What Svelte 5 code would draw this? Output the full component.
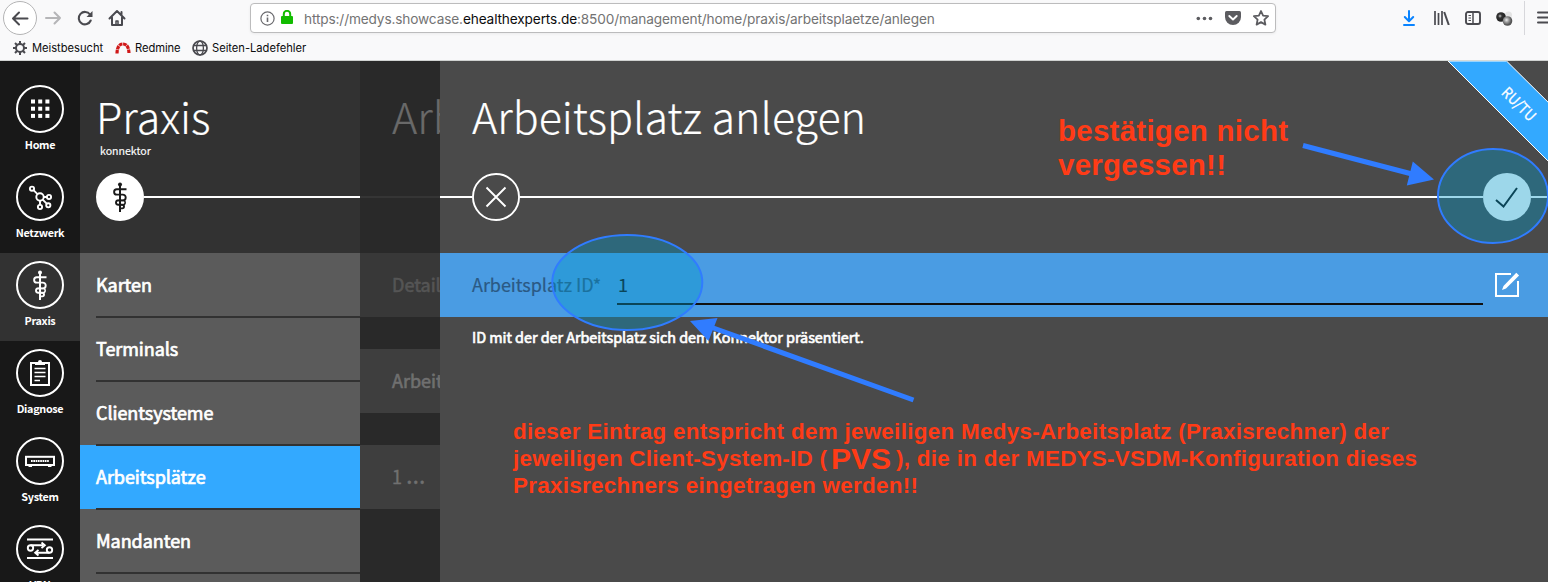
<script>
  const nav = [
    { id: 'home', label: 'Home' },
    { id: 'net', label: 'Netzwerk' },
    { id: 'praxis', label: 'Praxis' },
    { id: 'diag', label: 'Diagnose' },
    { id: 'system', label: 'System' },
    { id: 'vpn', label: 'VPN' }
  ];
  const menu = ['Karten', 'Terminals', 'Clientsysteme', 'Arbeitsplätze', 'Mandanten', ''];
  const dots = [15, 22.2, 29.4];
</script>

{#snippet staff()}
  <circle cx="24" cy="11.6" r="2" fill="currentColor" stroke="none" />
  <path d="M24 12v27" stroke-width="2" />
  <path d="M30.5 16.200H20.800a2.700 2.700 0 0 0 0 5.400h6a2.900 2.900 0 0 1 0 5.800h-4.600a2.100 2.100 0 0 0 0 4.400h4a1.800 1.800 0 0 1 0 3.600H23" stroke-width="1.900" />
  <path d="M20.500 27.400h6.500a2.200 2.200 0 0 1 0 4.400h-2" stroke-width="1.500" />
{/snippet}

<div class="page">
  <header class="chrome">
    <div class="toolbar">
      <div class="back">
        <svg width="34" height="34" viewBox="0 0 34 34" fill="none" stroke="#4a4a4f" stroke-width="2" stroke-linecap="round" stroke-linejoin="round"><path d="M10 17.500h14.500M16 11.500l-6 6 6 6" /></svg>
      </div>
      <svg class="fwd" width="18" height="18" viewBox="0 0 18 18" fill="none" stroke="#b5b5b7" stroke-width="2" stroke-linecap="round" stroke-linejoin="round"><path d="M2 9h14M10.500 3.500l5.500 5.500-5.500 5.500" /></svg>
      <svg class="reload" width="18" height="18" viewBox="0 0 18 18" fill="none" stroke="#4a4a4f" stroke-width="2.100" stroke-linecap="round"><path d="M14 5.500A6.200 6.200 0 1 0 14.700 11.500" /><path d="M16.500 2v6h-6z" fill="#4a4a4f" stroke="none" /></svg>
      <svg class="house" width="18" height="18" viewBox="0 0 18 18" fill="none" stroke="#4a4a4f" stroke-width="2" stroke-linejoin="round" stroke-linecap="round"><path d="M1.500 9.500L9 2l7.500 7.500M4 8.500V16h10V8.500M13.500 3v2.500" /><path d="M8 16v-4h2v4" stroke-width="1.500" /></svg>
      <div class="url">
        <svg class="info" width="15" height="15" viewBox="0 0 15 15" fill="none" stroke="#6b6b6f" stroke-width="1.200"><circle cx="7.500" cy="7.500" r="6.600" /><path d="M7.500 6.500v4.500M7.500 3.800v1.500" stroke-width="1.600" /></svg>
        <svg class="lock" width="12" height="14" viewBox="0 0 12 14"><rect y="6" width="12" height="8" rx="1" fill="#12bc00" /><path d="M2.800 7V4a3.200 3.200 0 0 1 6.400 0v3" fill="none" stroke="#12bc00" stroke-width="2" /></svg>
        <div class="address">https://medys.showcase.<b>ehealthexperts.de</b>:8500/management/home/praxis/arbeitsplaetze/anlegen</div>
        <svg class="more" width="17" height="5" viewBox="0 0 17 5" fill="#5c5c60"><circle cx="2.300" cy="2.500" r="1.800" /><circle cx="8.500" cy="2.500" r="1.800" /><circle cx="14.500" cy="2.500" r="1.800" /></svg>
        <svg class="pocket" width="16" height="14" viewBox="0 0 16 14"><path d="M1.500 0h13Q16 0 16 1.500V6a8 8 0 0 1-16 0V1.500Q0 0 1.500 0z" fill="#5c5c60" /><path d="M4.300 5L8 8.500 11.700 5" fill="none" stroke="#fff" stroke-width="1.900" stroke-linecap="round" stroke-linejoin="round" /></svg>
        <svg class="star" width="16" height="16" viewBox="0 0 16 16" fill="none" stroke="#5c5c60" stroke-width="1.800" stroke-linejoin="round"><path d="M8 1l2.100 4.600 5 .6-3.700 3.400 1 5L8 12.100l-4.400 2.500 1-5L.9 6.200l5-.6z" /></svg>
      </div>
      <div class="tools">
        <svg width="12" height="16" viewBox="0 0 12 16" fill="none" stroke="#0a84ff" stroke-width="2" stroke-linecap="round" stroke-linejoin="round"><path d="M6 1v10M1.800 7L6 11.200 10.200 7M1 15h10" /></svg>
        <svg width="16" height="14" viewBox="0 0 16 14" fill="none" stroke="#4a4a4f" stroke-width="2"><path d="M1 0v14M4.500 2v12M8 0v14" stroke-width="1.700" /><path d="M10.200 1l4.600 13" /></svg>
        <svg width="16" height="14" viewBox="0 0 16 14" fill="none" stroke="#4a4a4f" stroke-width="1.900"><rect x="1" y="1" width="14" height="12" rx="2" /><path d="M8 1v12" stroke-width="1.500" /><path d="M3.500 4.500h2.500M3.500 7h2.500M3.500 9.500h2.500" stroke-width="1" /></svg>
        <svg width="17" height="15" viewBox="0 0 17 15">
          <defs>
            <radialGradient id="ball1" cx=".4" cy=".4"><stop offset="0" stop-color="#ccc" /><stop offset=".4" stop-color="#333" /><stop offset="1" stop-color="#222" /></radialGradient>
            <radialGradient id="ball2" cx=".4" cy=".4"><stop offset="0" stop-color="#eee" /><stop offset=".5" stop-color="#999" /><stop offset="1" stop-color="#555" /></radialGradient>
          </defs>
          <circle cx="12.500" cy="4" r="3.500" fill="#e4e4e4" /><circle cx="5" cy="6" r="4.800" fill="url(#ball1)" /><circle cx="11.500" cy="10" r="4.800" fill="url(#ball2)" />
        </svg>
        <i class="sep"></i>
        <svg class="burger" width="14" height="14" viewBox="0 0 14 14" stroke="#4a4a4f" stroke-width="2" stroke-linecap="round"><path d="M1 1.500h13M1 6.500h13M1 11.500h13" /></svg>
      </div>
    </div>
    <div class="bookmarks">
      <svg width="14" height="14" viewBox="0 0 14 14" fill="none" stroke="#4a4a4f"><circle cx="7" cy="7" r="4" stroke-width="2" /><path d="M7 0v3M7 11v3M0 7h3M11 7h3M2 2l2 2M10 10l2 2M12 2l-2 2M4 10l-2 2" stroke-width="2" /></svg>
      <span class="b1">Meistbesucht</span>
      <svg width="16" height="12" viewBox="0 0 16 12" fill="none" stroke-width="3.200"><path d="M2 11.500Q2.300 2 8 2T14 11.500" stroke="#d01818" stroke-dasharray="3.600 .6" /></svg>
      <span class="b2">Redmine</span>
      <svg width="16" height="16" viewBox="0 0 16 16" fill="none" stroke="#4a4a4f" stroke-width="1.300"><circle cx="8" cy="8" r="7" stroke-width="1.700" /><ellipse cx="8" cy="8" rx="3.400" ry="7" /><path d="M1.500 5.500h13M1.500 10.500h13" /></svg>
      <span class="b3">Seiten-Ladefehler</span>
    </div>
  </header>

  <div class="app">
    <nav class="side">
      {#each nav as n}
        <div class="item" class:on={n.id === 'praxis'}>
          <svg width="48" height="48" viewBox="0 0 48 48" fill="none" stroke="currentColor">
            <circle cx="24" cy="24" r="23" stroke-width="2" />
            {#if n.id === 'home'}
              {#each dots as y}{#each dots as x}<rect x={x} y={y - 0.500} width="4" height="4" fill="currentColor" stroke="none" />{/each}{/each}
            {:else if n.id === 'net'}
              <g stroke-width="1.900"><circle cx="24" cy="24" r="3.700" /><circle cx="16" cy="15.700" r="2.100" /><circle cx="33" cy="24" r="2.100" /><circle cx="32.300" cy="32.300" r="2.100" /><circle cx="24" cy="34" r="2.100" /><path d="M17.500 17.200l4 4M27.700 24h3.200M26.700 26.700l4 4M24 27.700v4.200" /></g>
            {:else if n.id === 'praxis'}
              {@render staff()}
            {:else if n.id === 'diag'}
              <path d="M19.500 14H15v22h18V14h-4.500" stroke-width="2" /><path d="M19 16v-3h3a2 2 0 0 1 4 0h3v3z" fill="currentColor" stroke="none" /><path d="M18.500 19.500h11M18.500 23.500h11M18.500 27.500h11M18.500 31.500h5.500" stroke-width="1.700" />
            {:else if n.id === 'system'}
              <rect x="10" y="19.800" width="28" height="8.200" stroke-width="2" /><path d="M15 24h18" stroke-width="2" stroke-dasharray="1.700 .6" /><path d="M12.500 29.300h3.500M32 29.300h3.500" stroke-width="1.600" />
            {:else}
              <path d="M11 14.500h26M11 33h26" stroke-width="2" /><g stroke-width="1.900"><circle cx="14.500" cy="23" r="2.700" /><circle cx="33.500" cy="25" r="2.700" /><path d="M14.500 20.300H27M25.500 17.500l3.300 2.800-3.300 2.800M33.500 27.700H20M22.500 24.900l-3.300 2.800 3.300 2.800" /></g>
            {/if}
          </svg>
          <span>{n.label}</span>
        </div>
      {/each}
    </nav>

    <section class="praxis">
      <div class="head">
        <h1>Praxis</h1>
        <p>konnektor</p>
        <div class="rail">
          <svg class="disc" width="48" height="48" viewBox="0 0 48 48" fill="none" stroke="currentColor">{@render staff()}</svg>
          <i></i>
        </div>
      </div>
      <div class="menu">
        {#each menu as m}<div class="entry" class:active={m === 'Arbeitsplätze'}>{m}</div>{/each}
      </div>
    </section>

    <section class="under">
      <div class="head"><h1>Arb</h1><div class="rail"><i></i></div></div>
      <div class="cell dim">Details</div>
      <div class="cell">Arbeitsplatz</div>
      <div class="cell thin">1 <span>…</span></div>
    </section>

    <section class="main">
      <div class="head">
        <h1>Arbeitsplatz anlegen</h1>
        <div class="rail">
          <i class="lead"></i>
          <svg width="48" height="48" viewBox="0 0 48 48" fill="none" stroke="#fff" stroke-width="1.900"><circle cx="24" cy="24" r="23.050" /><path d="M14.500 14.500l19 19M33.500 14.500l-19 19" /></svg>
          <i></i>
          <svg class="ok" width="48" height="48" viewBox="0 0 48 48" fill="none" stroke="#111" stroke-width="2"><path d="M13 27l7.500 6.500L34 15" /></svg>
          <i class="tail"></i>
        </div>
      </div>
      <div class="field">
        <label for="wid">Arbeitsplatz ID*</label>
        <div class="value" id="wid">1</div>
        <svg width="26" height="26" viewBox="0 0 26 26" fill="none" stroke="#fff" stroke-width="2"><path d="M17 3H2v22h22V10" /><path d="M8 19l1.500-4L22.300 1.800l2.800 2.800L12 17.500z" fill="#fff" stroke="none" /></svg>
      </div>
      <p class="help">ID mit der der Arbeitsplatz sich dem Konnektor präsentiert.</p>
    </section>
  </div>

  <svg class="notes" width="1548" height="582" viewBox="0 0 1548 582">
    <path d="M1448 61L1560 173V114L1506.500 61z" fill="#33a9ff" stroke="#fff" stroke-width="1" />
    <path d="M1440 60.500h75" stroke="#d6dad7" />
    <text class="ribbon" x="1519" y="109.500" transform="rotate(45 1519 104)" text-anchor="middle" textLength="41" lengthAdjust="spacingAndGlyphs">RU/TU</text>
    <g fill="rgba(2,151,200,.387)" stroke="#307cff" stroke-width="2">
      <ellipse cx="1493" cy="196" rx="55" ry="47" />
      <ellipse cx="627.300" cy="282.500" rx="75" ry="47.500" />
    </g>
    <g fill="#307cff" stroke="#307cff">
      <path d="M1303 145.500L1412 174M913.500 400L712 327.500" stroke-width="5" />
      <path d="M1434 179.500L1412.800 161.500 1406.800 185.500zM690 321L717.500 318 708.500 341z" stroke="none" />
    </g>
    <g class="red">
      <g font-size="29.500">
        <text x="1058" y="141" textLength="230">bestätigen nicht</text>
        <text x="1058" y="175" textLength="168">vergessen!!</text>
      </g>
      <g font-size="22.400">
        <text x="513" y="439" textLength="876">dieser Eintrag entspricht dem jeweiligen Medys-Arbeitsplatz (Praxisrechner) der</text>
        <text x="513" y="466" textLength="314">jeweiligen Client-System-ID (</text>
        <text x="831" y="469" font-size="30" textLength="60">PVS</text>
        <text x="896" y="466" textLength="521">), die in der MEDYS-VSDM-Konfiguration dieses</text>
        <text x="513" y="493" textLength="405">Praxisrechners eingetragen werden!!</text>
      </g>
    </g>
  </svg>
</div>

<style>
  :global(body) { margin: 0; overflow: hidden; }
  .page { position: relative; width: 1548px; height: 582px; overflow: hidden; font-family: "Noto Sans CJK SC", "Noto Sans", sans-serif; color: #fff; }
  svg { display: block; flex: none; }
  h1, p { margin: 0; font-weight: 300; }
  .chrome { box-sizing: border-box; height: 61px; background: #f9f9fa; border-bottom: 1px solid #d0d2d1; font-family: Inter, sans-serif; color: #0c0c0d; }
  .toolbar { display: flex; align-items: center; height: 36px; padding-left: 3px; }
  .back { box-sizing: border-box; width: 34px; height: 34px; border: 1px solid #b4b4b5; border-radius: 50%; background: #fff; }
  .back svg { margin: -1px; }
  .fwd { margin-left: 7px; }
  .reload { margin-left: 14px; }
  .house { margin-left: 14px; }
  .url { box-sizing: border-box; display: flex; align-items: center; width: 1026px; flex: none; height: 30px; margin-left: 124px; padding-left: 9px; background: #fff; border: 1px solid #bcbcbd; border-radius: 4px; box-shadow: 0 1px 3px rgba(0,0,0,.06); }
  .lock { margin-left: 6px; margin-top: -2px; }
  .address { width: 890px; margin: 1px 0 0 11px; font-size: 13.650px; letter-spacing: -.13px; color: #737373; white-space: nowrap; }
  .address b { font-weight: 400; color: #0c0c0d; }
  .more { margin-left: 2px; }
  .pocket { margin-left: 12px; }
  .star { margin-left: 12px; }
  .tools { display: flex; align-items: center; margin-left: 127px; gap: 18px; }
  .tools svg:nth-child(2) { margin-left: 1px; }
  .tools svg:nth-child(3) { margin-left: -3px; }
  .tools svg:nth-child(4) { margin-left: -3px; }
  .sep { width: 1px; height: 34px; margin-left: -7px; background: #d7d7db; }
  .burger { margin-left: -6px; }
  .bookmarks { display: flex; align-items: center; height: 24px; padding-left: 13px; font-size: 11.200px; }
  .bookmarks span { white-space: nowrap; }
  .b1 { width: 83px; margin-left: 5px; letter-spacing: -.03px; }
  .b2 { width: 57px; margin-left: 4px; letter-spacing: -.08px; }
  .b3 { margin-left: 4px; letter-spacing: -.03px; }
  .app { display: flex; height: 521px; }
  .side { box-sizing: border-box; width: 80px; padding-top: 16px; background: #181818; overflow: hidden; flex: none; }
  .item { box-sizing: border-box; height: 88px; padding-top: 8px; display: flex; flex-direction: column; align-items: center; }
  .item.on { background: #323232; }
  .item span { font-size: 10.800px; line-height: 16px; font-weight: 700; margin-top: 3px; letter-spacing: -.3px; }
  .praxis { width: 280px; background: #323232; flex: none; }
  .head { box-sizing: border-box; height: 192px; padding-top: 22px; position: relative; white-space: nowrap; }
  h1 { font-size: 43px; line-height: 64px; height: 64px; -webkit-text-stroke: .2px currentColor; }
  .praxis h1 { padding-left: 16px; }
  .praxis p { height: 16px; margin: -4px 0 14px 20px; font-size: 10.600px; line-height: 16px; font-weight: 400; -webkit-text-stroke: .15px currentColor; }
  .rail { display: flex; align-items: center; height: 48px; }
  .rail i { flex: 1; height: 2px; background: #fff; }
  .disc { margin-left: 16px; border-radius: 50%; background: #fff; color: #1a1a1a; }
  .entry { box-sizing: border-box; position: relative; height: 64px; padding-left: 16px; line-height: 63px; font-size: 18px; letter-spacing: -.05px; font-weight: 400; -webkit-text-stroke: .7px currentColor; background: #5b5b5b; }
  .entry::after { content: ""; position: absolute; z-index: 1; left: 16px; right: 0; bottom: -1px; height: 2px; background: #323232; }
  .entry.active { background: #33a9ff; }
  .under { width: 80px; background: #292929; color: #707070; overflow: hidden; flex: none; }
  .under h1 { padding-left: 32px; color: #696969; width: 48px; overflow: hidden; }
  .under .rail, .main .rail { margin-top: 26px; }
  .under .rail i { background: #353535; }
  .cell { height: 64px; margin-bottom: 32px; padding-left: 32px; line-height: 63px; font-size: 18px; font-weight: 400; -webkit-text-stroke: .6px currentColor; background: #3e3e3e; white-space: nowrap; overflow: hidden; }
  .dim { background: #383838; color: #555; }
  .thin { -webkit-text-stroke-width: .4px; }
  .thin span { font-family: "Open Sans", sans-serif; font-size: 25px; line-height: 1; }
  .main { flex: 1; background: #4a4a4a; }
  .main h1 { padding-left: 32px; }
  .rail .lead { flex: 0 0 32px; }
  .rail .tail { flex: 0 0 17px; }
  .ok { border-radius: 50%; background: #fff; }
  .field { display: flex; height: 64px; padding-left: 32px; background: #4a9ce3; font-size: 18px; line-height: 63px; color: #111; }
  .field label { width: 145px; color: #2b5983; white-space: nowrap; letter-spacing: -.04px; -webkit-text-stroke: .2px currentColor; }
  .value { box-sizing: border-box; width: 866px; height: 52px; padding-left: 1px; border-bottom: 2px solid #111; -webkit-text-stroke: .2px currentColor; }
  .field svg { margin: 18px 0 0 11px; }
  .help { padding: 9px 0 0 32px; font-size: 14.400px; letter-spacing: -.03px; line-height: 22px; font-weight: 400; -webkit-text-stroke: .65px currentColor; white-space: nowrap; }
  .notes { position: absolute; left: 0; top: 0; z-index: 3; }
  .ribbon { font-size: 15px; fill: #fff; stroke: #fff; stroke-width: .3px; }
  .red { font-family: "Liberation Sans", Arial, sans-serif; font-weight: 700; fill: #ff3b16; }
</style>
